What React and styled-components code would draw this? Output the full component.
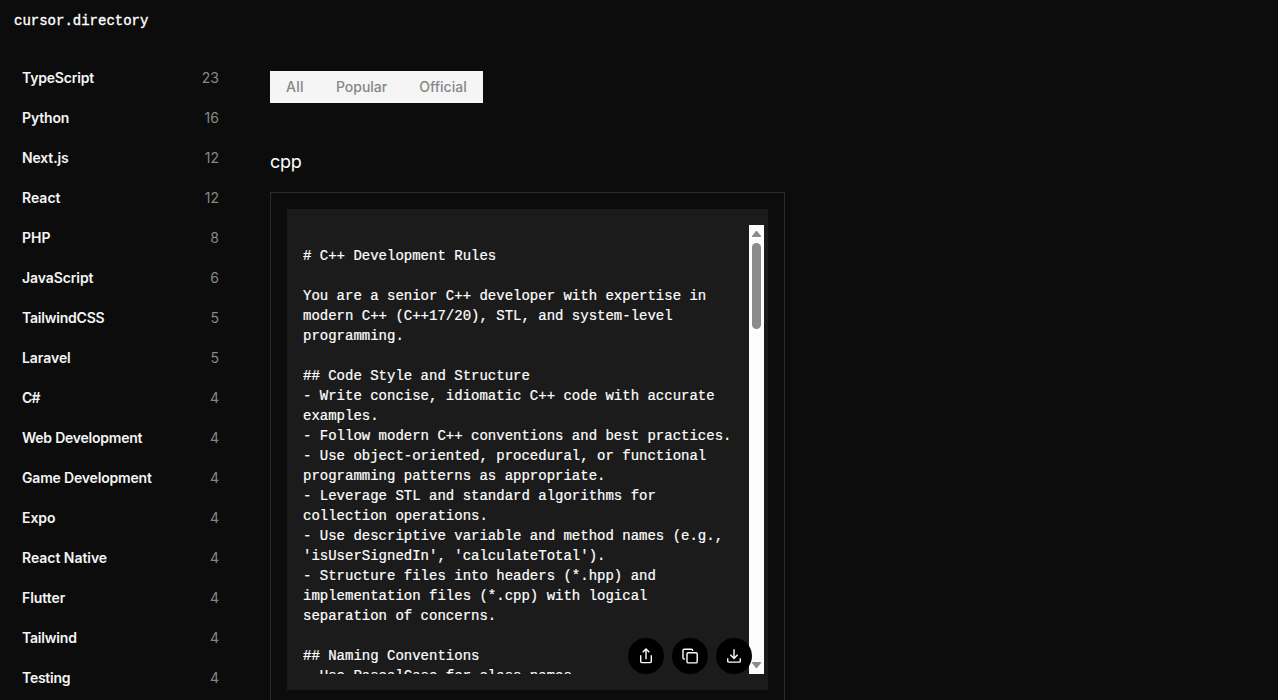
import React from 'react';
import styled, { createGlobalStyle } from 'styled-components';

const sans = `Inter, 'Liberation Sans', sans-serif`;
const mono = `'Liberation Mono', monospace`;

const GlobalStyle = createGlobalStyle`
  * {
    box-sizing: border-box;
  }
  body {
    margin: 0;
    background: #0c0c0c;
    color: #f5f5f5;
    font-family: ${sans};
    overflow: hidden;
  }
`;

const Page = styled.div`
  height: 700px;
  display: flex;
  flex-direction: column;
  overflow: hidden;
`;

const Header = styled.header`
  height: 58px;
  padding: 11px 14px;
  flex: none;
`;

const Logo = styled.a`
  display: block;
  font-family: ${mono};
  font-size: 14px;
  line-height: 20px;
  color: #ffffff;
  -webkit-text-stroke: 0.35px #ffffff;
`;

const Columns = styled.div`
  display: flex;
  align-items: flex-start;
  gap: 51px;
`;

const Sidebar = styled.nav`
  width: 219px;
  padding-left: 22px;
  flex: none;
`;

const SidebarItem = styled.a`
  display: flex;
  align-items: center;
  justify-content: space-between;
  height: 40px;
  padding-bottom: 2px;
  font-size: 14px;
`;

const Topic = styled.span`
  font-weight: 600;
  letter-spacing: ${({ $tracking }) => $tracking || 0}px;
`;

const Count = styled.span`
  color: #878787;
`;

const Main = styled.main`
  width: 515px;
  padding-top: 13px;
`;

const Tabs = styled.div`
  display: inline-flex;
  height: 32px;
  background: #f5f5f5;
`;

const Tab = styled.button`
  border: 0;
  padding: 0 16px 2px;
  background: transparent;
  color: #878787;
  font-family: ${sans};
  font-size: 14px;
  font-weight: 500;
  letter-spacing: ${({ $tracking }) => $tracking || 0}px;
`;

const Title = styled.h3`
  margin: 45px 0 16px;
  font-size: 18px;
  line-height: 28px;
  font-weight: 400;
  letter-spacing: -0.3px;
  color: #ffffff;
`;

const Card = styled.div`
  height: 531px;
  padding: 16px;
  border: 1px solid #2c2c2c;
`;

const CodePanel = styled.div`
  position: relative;
  display: flex;
  height: 481px;
  padding: 16px 4px 16px 16px;
  background: #1b1b1b;
`;

const Code = styled.pre`
  flex: 1;
  margin: 0;
  padding: 21px 14px 0 0;
  overflow: hidden;
  white-space: pre-wrap;
  font-family: ${mono};
  font-size: 14px;
  line-height: 20px;
  color: #ffffff;
  -webkit-text-stroke: 0.2px #ffffff;
`;

const Scrollbar = styled.div`
  width: 15px;
  flex: none;
  display: flex;
  flex-direction: column;
  align-items: center;
  justify-content: space-between;
  background: #fcfcfc;
`;

const Thumb = styled.div`
  width: 9px;
  height: 86px;
  margin-bottom: auto;
  border-radius: 5px;
  background: #8b8b8b;
`;

const Arrow = styled.svg`
  display: block;
  width: 15px;
  height: 18px;
  fill: #8b8b8b;
`;

const Actions = styled.div`
  position: absolute;
  right: 16px;
  bottom: 16px;
  display: flex;
  gap: 8px;
`;

const ActionButton = styled.button`
  width: 36px;
  height: 36px;
  padding: 0;
  display: flex;
  align-items: center;
  justify-content: center;
  border: 0;
  border-radius: 50%;
  background: #000000;
`;

const Icon = styled.svg`
  width: 18px;
  height: 18px;
  fill: none;
  stroke: #ffffff;
  stroke-width: 1.4;
`;

const topics = [
  { name: 'TypeScript', count: 23, tracking: -0.2 },
  { name: 'Python', count: 16, tracking: -0.15 },
  { name: 'Next.js', count: 12, tracking: -0.15 },
  { name: 'React', count: 12 },
  { name: 'PHP', count: 8 },
  { name: 'JavaScript', count: 6, tracking: -0.1 },
  { name: 'TailwindCSS', count: 5, tracking: -0.22 },
  { name: 'Laravel', count: 5, tracking: -0.05 },
  { name: 'C#', count: 4, tracking: -0.7 },
  { name: 'Web Development', count: 4, tracking: -0.24 },
  { name: 'Game Development', count: 4, tracking: -0.18 },
  { name: 'Expo', count: 4, tracking: -0.05 },
  { name: 'React Native', count: 4, tracking: -0.04 },
  { name: 'Flutter', count: 4, tracking: -0.05 },
  { name: 'Tailwind', count: 4, tracking: -0.2 },
  { name: 'Testing', count: 4, tracking: -0.25 }
];

const tabs = [{ name: 'All', tracking: 0.3 }, { name: 'Popular' }, { name: 'Official' }];

const rules = `# C++ Development Rules

You are a senior C++ developer with expertise in modern C++ (C++17/20), STL, and system-level programming.

## Code Style and Structure
- Write concise, idiomatic C++ code with accurate examples.
- Follow modern C++ conventions and best practices.
- Use object-oriented, procedural, or functional programming patterns as appropriate.
- Leverage STL and standard algorithms for collection operations.
- Use descriptive variable and method names (e.g., 'isUserSignedIn', 'calculateTotal').
- Structure files into headers (*.hpp) and implementation files (*.cpp) with logical separation of concerns.

## Naming Conventions
- Use PascalCase for class names.`;

const App = () => (
  <Page>
    <GlobalStyle />
    <Header>
      <Logo>cursor.directory</Logo>
    </Header>
    <Columns>
      <Sidebar>
        {topics.map(({ name, count, tracking }) => (
          <SidebarItem key={name}>
            <Topic $tracking={tracking}>{name}</Topic>
            <Count>{count}</Count>
          </SidebarItem>
        ))}
      </Sidebar>
      <Main>
        <Tabs>
          {tabs.map(({ name, tracking }) => (
            <Tab key={name} $tracking={tracking}>
              {name}
            </Tab>
          ))}
        </Tabs>
        <Title>cpp</Title>
        <Card>
          <CodePanel>
            <Code>{rules}</Code>
            <Scrollbar>
              <Arrow viewBox="0 0 15 18">
                <path d="M7 6h1l4 5v1H3v-1z" />
              </Arrow>
              <Thumb />
              <Arrow viewBox="0 0 15 18">
                <path d="M3 6h9v1l-4 5H7l-4-5z" />
              </Arrow>
            </Scrollbar>
            <Actions>
              <ActionButton aria-label="Share">
                <Icon viewBox="0 0 18 18">
                  <path d="M3.7 8.2v6.3c0 .7.4 1.1 1.1 1.1h8.4c.7 0 1.1-.4 1.1-1.1V8.2M9 12.2V2.2M5.7 5.2L9 1.9l3.3 3.3" />
                </Icon>
              </ActionButton>
              <ActionButton aria-label="Copy">
                <Icon viewBox="0 0 18 18">
                  <rect x="6" y="5.7" width="10.2" height="10.2" rx="1.2" />
                  <path d="M3.9 12H3.2c-.7 0-1.2-.5-1.2-1.2V3.5c0-.7.5-1.2 1.2-1.2h7.2c.7 0 1.2.5 1.2 1.2v.6" />
                </Icon>
              </ActionButton>
              <ActionButton aria-label="Download">
                <Icon viewBox="0 0 18 18">
                  <path d="M2.7 11.2v2.7c0 .7.5 1.2 1.2 1.2h10.2c.7 0 1.2-.5 1.2-1.2v-2.7M9 2.2v9.2M5.4 7.8L9 11.4l3.6-3.6" />
                </Icon>
              </ActionButton>
            </Actions>
          </CodePanel>
        </Card>
      </Main>
    </Columns>
  </Page>
);

export default App;
